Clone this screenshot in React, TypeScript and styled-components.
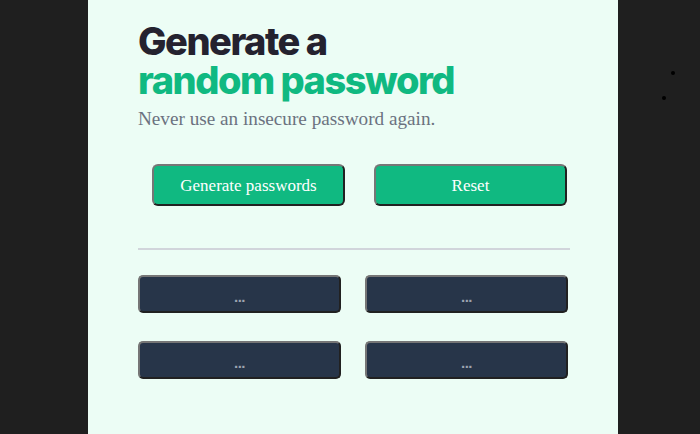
import React from "react";
import styled, { createGlobalStyle } from "styled-components";

const Global = createGlobalStyle`
  html, body { margin: 0; padding: 0; background: #1f1f1f; }
  body { font-family: "Liberation Serif", serif; }
`;

const Page = styled.div`
  position: relative;
  width: 700px;
  height: 434px;
  overflow: hidden;
  background: #1f1f1f;
`;

const Panel = styled.main`
  margin-left: 88px;
  width: 530px;
  height: 434px;
  box-sizing: border-box;
  background: #ecfdf5;
  padding: 22px 48px 0 50px;
  display: flex;
  flex-direction: column;
`;

const Title = styled.h1`
  margin: 0;
  font-family: Inter, "Noto Sans", sans-serif;
  font-weight: 800;
  font-size: 38px;
  line-height: 39px;
  letter-spacing: -1.5px;
  color: #24222f;
`;

const Accent = styled.span`
  display: block;
  color: #10b981;
`;

const Subtitle = styled.p`
  margin: 7px 0 0 0;
  font-family: "Liberation Serif", serif;
  font-size: 19.2px;
  line-height: 24px;
  color: #6b7280;
`;

const ButtonRow = styled.div`
  display: flex;
  gap: 29px;
  padding-left: 14px;
  margin-top: 33px;
`;

const ActionButton = styled.button`
  width: 193px;
  height: 42px;
  box-sizing: border-box;
  background: #10b981;
  color: #ffffff;
  border: 2px outset #767676;
  border-radius: 6px;
  font-family: "Liberation Serif", serif;
  font-size: 17px;
  padding: 2px 0 0 0;
`;

const Divider = styled.hr`
  margin: 42px 0 0 0;
  height: 2px;
  border: none;
  background: #d1d5db;
`;

const Grid = styled.div`
  display: grid;
  grid-template-columns: 203px 203px;
  column-gap: 24px;
  row-gap: 28px;
  margin-top: 25px;
`;

const PasswordBox = styled.button`
  height: 38px;
  box-sizing: border-box;
  background: #273549;
  border: 2px outset #767676;
  border-radius: 5px;
  color: #9ca3af;
  font-family: "Liberation Sans", sans-serif;
  font-size: 15px;
  font-weight: 700;
  padding: 4px 0 0 0;
  letter-spacing: -0.5px;
`;

const Dot = styled.span<{ $x: number; $y: number }>`
  position: absolute;
  left: ${(p) => p.$x}px;
  top: ${(p) => p.$y}px;
  width: 4px;
  height: 4px;
  border-radius: 50%;
  background: #000;
`;

export default function App() {
  const passwords = ["...", "...", "...", "..."];
  return (
    <Page>
      <Global />
      <Panel>
        <Title>
          Generate a
          <Accent>random password</Accent>
        </Title>
        <Subtitle>Never use an insecure password again.</Subtitle>
        <ButtonRow>
          <ActionButton>Generate passwords</ActionButton>
          <ActionButton>Reset</ActionButton>
        </ButtonRow>
        <Divider />
        <Grid>
          {passwords.map((p, i) => (
            <PasswordBox key={i}>{p}</PasswordBox>
          ))}
        </Grid>
      </Panel>
      <Dot $x={671} $y={71} />
      <Dot $x={662} $y={96} />
    </Page>
  );
}
